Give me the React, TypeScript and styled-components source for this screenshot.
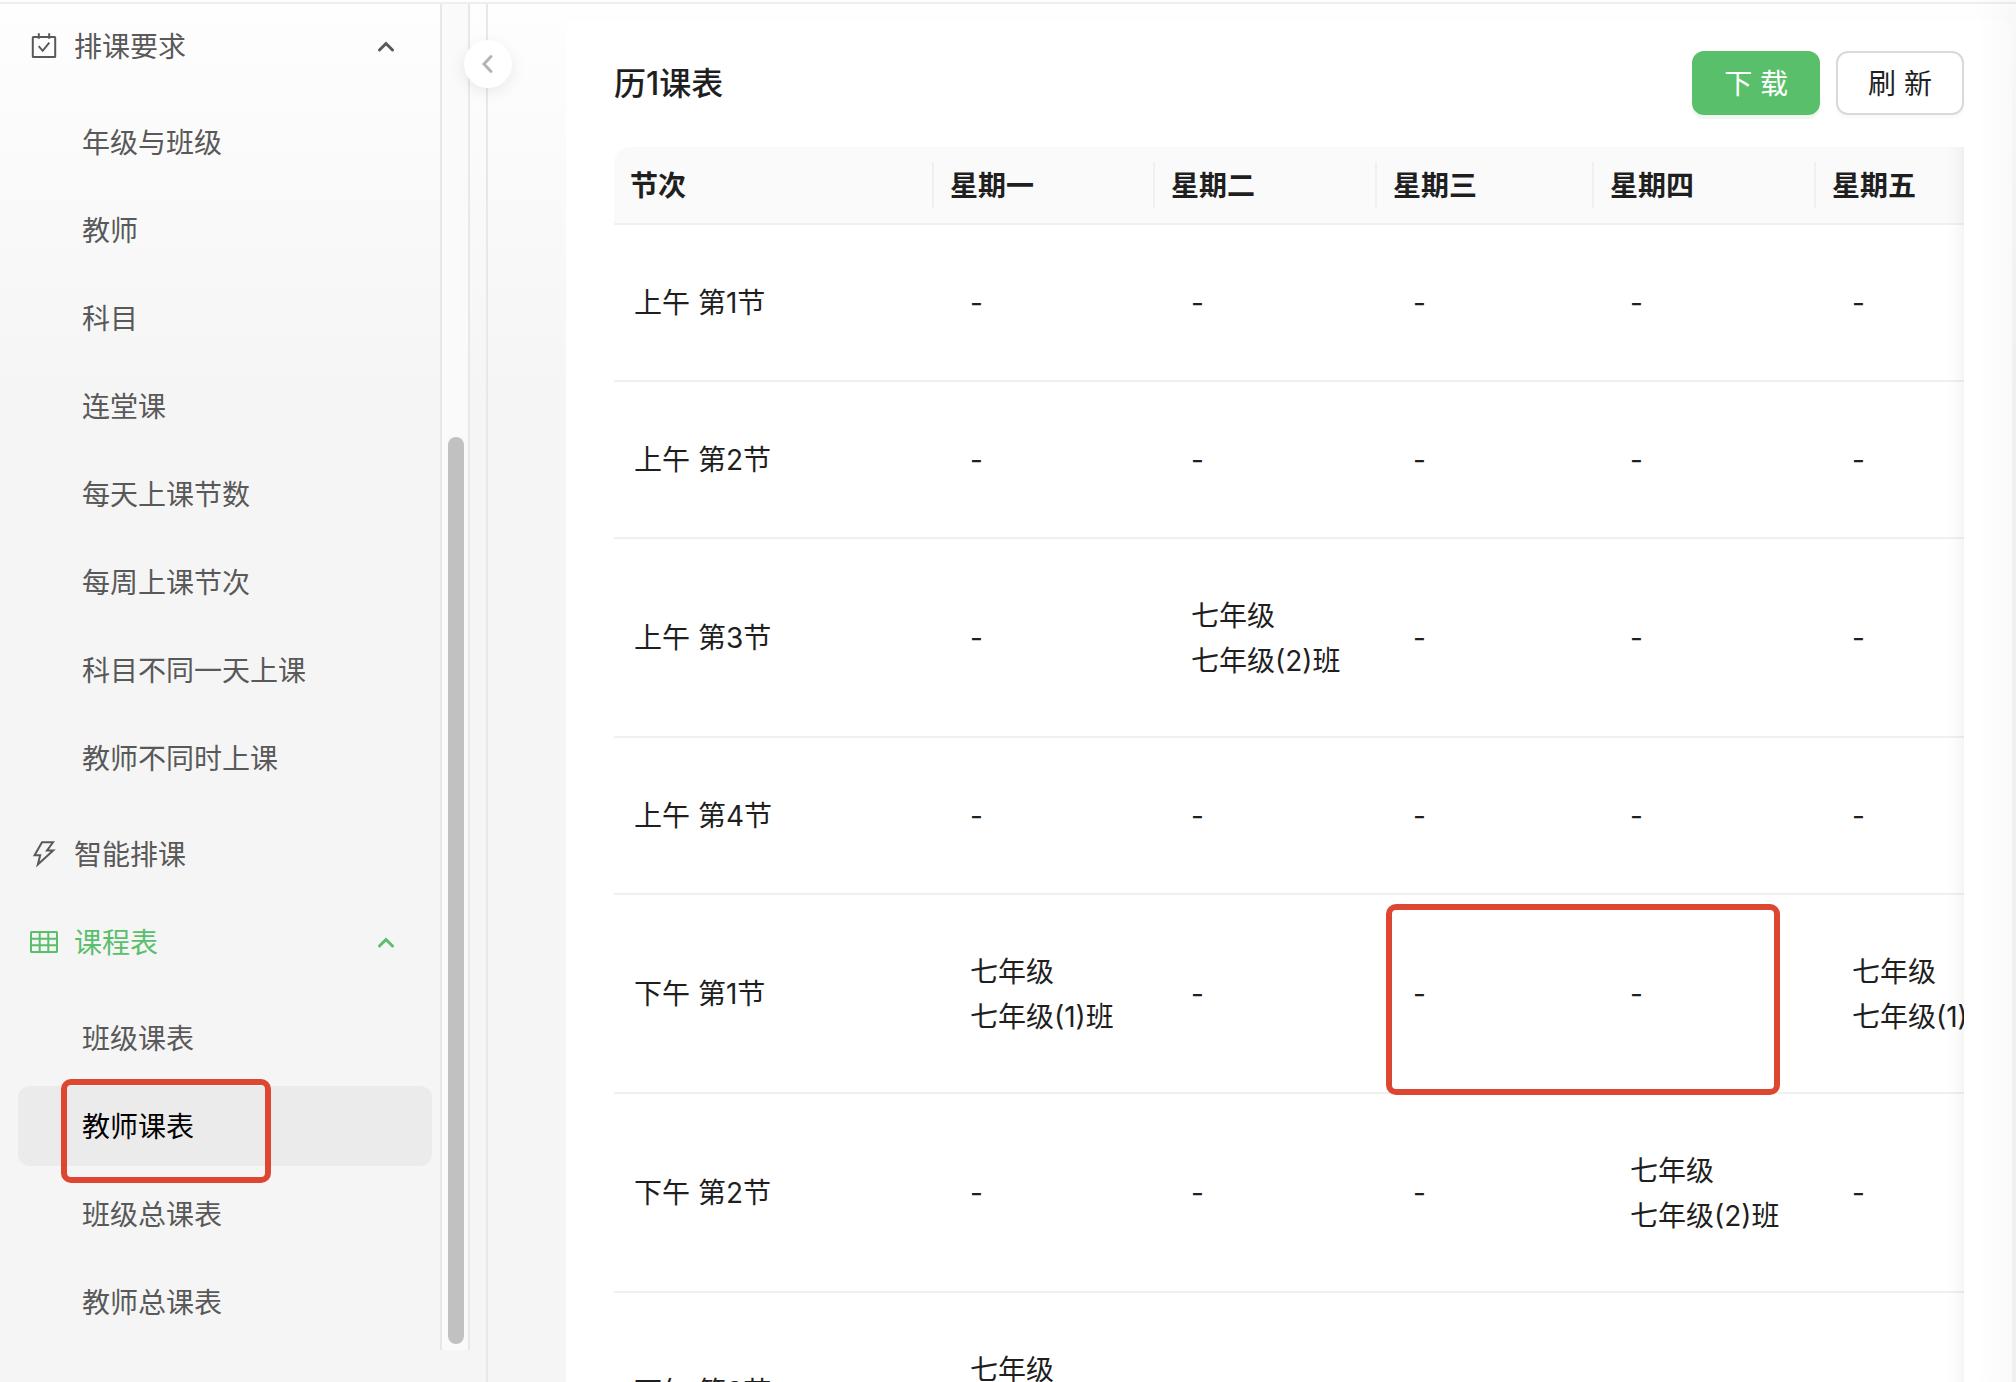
import React from "react";
import styled, { createGlobalStyle, css } from "styled-components";

const GlobalStyle = createGlobalStyle`
  *, *::before, *::after { box-sizing: border-box; }
  body {
    margin: 0;
    font-family: Inter, "Noto Sans CJK SC", sans-serif;
    font-size: 28px;
    line-height: 45px;
    color: #1f1f1f;
    background: #ffffff;
  }
  button { font: inherit; color: inherit; }
`;

const Page = styled.div`
  display: flex;
  height: 100vh;
  overflow: hidden;
  position: relative;
  padding-top: 2px;
  background: linear-gradient(#fefefe, #f5f5f5 400px);
`;

const Shell = styled.div`
  display: flex;
  flex: 1;
  min-width: 0;
  border-top: 2px solid #eeeeee;
`;

const EdgeShade = styled.div`
  position: absolute;
  top: 0;
  right: 0;
  bottom: 0;
  width: 40px;
  pointer-events: none;
  background: linear-gradient(to right, rgba(0, 0, 0, 0), rgba(0, 0, 0, 0.025));
`;

const Sidebar = styled.aside`
  position: relative;
  flex: none;
  width: 488px;
  padding: 0 16px 32px 0;
  border-right: 2px solid #e8e8e8;
`;

const ScrollArea = styled.div`
  display: flex;
  height: 100%;
`;

const Menu = styled.nav`
  flex: 1;
  min-width: 0;
  padding: 2px 8px 0 18px;
  overflow: hidden;
`;

const Track = styled.div`
  display: flex;
  flex-direction: column;
  justify-content: flex-end;
  width: 30px;
  padding: 6px 4px 6px 6px;
  border: solid #e8e8e8;
  border-width: 0 2px;
  background: #fafafa;
`;

const Thumb = styled.div`
  height: 68%;
  border-radius: 8px;
  background: #c1c1c1;
`;

const GroupTitle = styled.button<{ $active?: boolean }>`
  display: flex;
  align-items: center;
  gap: 16px;
  width: 100%;
  height: 80px;
  padding: 0 36px 0 12px;
  border: 0;
  background: none;
  text-align: left;
  color: ${(p) => (p.$active ? "#5abf6b" : "#595959")};

  & > span {
    flex: 1;
    padding-top: 2px;
  }
`;

const List = styled.ul`
  margin: 0;
  padding: 16px 0;
  list-style: none;
  display: flex;
  flex-direction: column;
  gap: 8px;
`;

const Gap = styled.div`
  height: 8px;
`;

const Item = styled.li`
  position: relative;
`;

const ItemLink = styled.a<{ $selected?: boolean }>`
  display: flex;
  align-items: center;
  height: 80px;
  padding: 2px 0 0 64px;
  border-radius: 12px;
  text-decoration: none;
  color: #595959;
  ${(p) =>
    p.$selected &&
    css`
      color: #000000;
      background: #ebebeb;
    `}
`;

const Mark = styled.div`
  position: absolute;
  border: 6px solid #dd4630;
  border-radius: 10px;
  pointer-events: none;
  z-index: 2;
`;

const ItemMark = styled(Mark)`
  left: 43px;
  top: -7px;
  width: 210px;
  height: 104px;
`;

const CellMark = styled(Mark)`
  left: 9px;
  top: 9px;
  width: 394px;
  height: 191px;
`;

const Collapse = styled.button`
  position: absolute;
  top: 36px;
  right: -26px;
  display: grid;
  place-items: center;
  width: 48px;
  height: 48px;
  padding: 0;
  border: 0;
  border-radius: 50%;
  color: #b5b5b5;
  background: #ffffff;
  box-shadow: 0 4px 16px rgba(0, 0, 0, 0.08);
`;

const Main = styled.main`
  flex: 1;
  min-width: 0;
  padding: 16px 4px 0 78px;
`;

const Card = styled.section`
  height: 100%;
  padding: 31px 48px 0;
  overflow: hidden;
  border-radius: 12px 12px 0 0;
  background: #ffffff;
`;

const CardHead = styled.header`
  display: flex;
  align-items: center;
  justify-content: space-between;
  margin-bottom: 32px;
`;

const Title = styled.h1`
  margin: 0;
  font-size: 32px;
  font-weight: 500;
`;

const Actions = styled.div`
  display: flex;
  gap: 16px;
`;

const Button = styled.button<{ $primary?: boolean }>`
  height: 64px;
  padding: 2px 30px 0;
  border: 2px solid ${(p) => (p.$primary ? "#5abf6b" : "#d9d9d9")};
  border-radius: 12px;
  line-height: 44px;
  color: ${(p) => (p.$primary ? "#ffffff" : "#1f1f1f")};
  background: ${(p) => (p.$primary ? "#5abf6b" : "#ffffff")};
  box-shadow: 0 4px 0 ${(p) => (p.$primary ? "rgba(90, 191, 107, 0.1)" : "rgba(0, 0, 0, 0.02)")};
`;

const TableWrap = styled.div`
  position: relative;
  overflow: hidden;
  border-radius: 16px 0 0 0;

  &::after {
    content: "";
    position: absolute;
    inset: 0 0 0 auto;
    width: 60px;
    pointer-events: none;
    box-shadow: inset -20px 0 16px -16px rgba(5, 5, 5, 0.06);
  }
`;

const Table = styled.table`
  width: 100%;
  min-width: 1423px;
  table-layout: fixed;
  border-collapse: separate;
  border-spacing: 0;
`;

const Th = styled.th`
  position: relative;
  height: 78px;
  padding: 2px 16px 0;
  border-bottom: 2px solid #f0f0f0;
  text-align: left;
  font-weight: 600;
  background: #fafafa;

  &:not(:last-child)::after {
    content: "";
    position: absolute;
    top: 15px;
    right: 0;
    width: 2px;
    height: 46px;
    background: #f0f0f0;
  }
`;

const Td = styled.td<{ $tall?: boolean; $label?: boolean }>`
  position: relative;
  height: ${(p) => (p.$tall ? 199 : 157)}px;
  padding: 2px 0 0 ${(p) => (p.$label ? 20 : 36)}px;
  border-bottom: 2px solid #f0f0f0;
  white-space: nowrap;
`;

const Chevron = ({ left }: { left?: boolean }) => (
  <svg width="20" height="20" viewBox="0 0 20 20" fill="none" stroke="currentColor" strokeWidth="3" strokeLinecap="round">
    <path d={left ? "M13 2.5L6 10l7 7.5" : "M3.5 14L10 7.5l6.5 6.5"} />
  </svg>
);

const MenuIcon = ({ children }: { children: React.ReactNode }) => (
  <svg width="28" height="28" viewBox="0 0 28 28" fill="none" stroke="currentColor" strokeWidth="2" aria-hidden="true">
    {children}
  </svg>
);

const CalendarIcon = () => (
  <MenuIcon>
    <rect x="2.8" y="5" width="22.4" height="20" rx="0.6" />
    <path d="M8.8 1.2v5.6M19.2 1.2v5.6M8.7 14.2l4 4.6 6.6-8.2" />
  </MenuIcon>
);

const BoltIcon = () => (
  <MenuIcon>
    <path d="M12 2.3h11L17 10.5h6.2L7.8 24.6l2.4-9.4H4.6z" />
  </MenuIcon>
);

const GridIcon = () => (
  <MenuIcon>
    <rect x="1" y="4" width="26" height="20" rx="0.6" />
    <path d="M1 10.7h26M1 17.3h26M9.7 4v20M18.3 4v20" />
  </MenuIcon>
);

const requirements = ["年级与班级", "教师", "科目", "连堂课", "每天上课节数", "每周上课节次", "科目不同一天上课", "教师不同时上课"];
const schedules = ["班级课表", "教师课表", "班级总课表", "教师总课表"];
const columns = ["节次", "星期一", "星期二", "星期三", "星期四", "星期五"];
const widths = [320, 221, 222, 217, 222, 221];

type Row = { label: string; cells: (string | null)[] };
const rows: Row[] = [
  { label: "上午 第1节", cells: [null, null, null, null, null] },
  { label: "上午 第2节", cells: [null, null, null, null, null] },
  { label: "上午 第3节", cells: [null, "七年级(2)班", null, null, null] },
  { label: "上午 第4节", cells: [null, null, null, null, null] },
  { label: "下午 第1节", cells: ["七年级(1)班", null, null, null, "七年级(1)班"] },
  { label: "下午 第2节", cells: [null, null, null, "七年级(2)班", null] },
  { label: "下午 第3节", cells: ["七年级(1)班", null, null, null, null] },
];

export default function App() {
  return (
    <>
      <GlobalStyle />
      <Page>
        <Shell>
          <Sidebar>
            <ScrollArea>
              <Menu aria-label="主菜单">
                <GroupTitle type="button" aria-expanded="true">
                  <CalendarIcon />
                  <span>排课要求</span>
                  <Chevron />
                </GroupTitle>
                <List>
                  {requirements.map((name) => (
                    <Item key={name}>
                      <ItemLink href="#">{name}</ItemLink>
                    </Item>
                  ))}
                </List>
                <GroupTitle type="button">
                  <BoltIcon />
                  <span>智能排课</span>
                </GroupTitle>
                <Gap />
                <GroupTitle type="button" aria-expanded="true" $active>
                  <GridIcon />
                  <span>课程表</span>
                  <Chevron />
                </GroupTitle>
                <List>
                  {schedules.map((name) => {
                    const selected = name === "教师课表";
                    return (
                      <Item key={name}>
                        <ItemLink href="#" $selected={selected} aria-current={selected ? "page" : undefined}>
                          {name}
                        </ItemLink>
                        {selected && <ItemMark />}
                      </Item>
                    );
                  })}
                </List>
              </Menu>
              <Track>
                <Thumb />
              </Track>
            </ScrollArea>
            <Collapse type="button" aria-label="收起菜单">
              <Chevron left />
            </Collapse>
          </Sidebar>
          <Main>
            <Card>
              <CardHead>
                <Title>历1课表</Title>
                <Actions>
                  <Button type="button" $primary>下 载</Button>
                  <Button type="button">刷 新</Button>
                </Actions>
              </CardHead>
              <TableWrap>
                <Table>
                  <colgroup>
                    {widths.map((w, i) => (
                      <col key={i} style={{ width: w }} />
                    ))}
                  </colgroup>
                  <thead>
                    <tr>
                      {columns.map((c) => (
                        <Th key={c} scope="col">{c}</Th>
                      ))}
                    </tr>
                  </thead>
                  <tbody>
                    {rows.map((row) => {
                      const tall = row.cells.some(Boolean);
                      return (
                        <tr key={row.label}>
                          <Td $tall={tall} $label>{row.label}</Td>
                          {row.cells.map((cell, i) => (
                            <Td key={i} $tall={tall}>
                              {cell ? (
                                <>
                                  <div>七年级</div>
                                  <div>{cell}</div>
                                </>
                              ) : (
                                "-"
                              )}
                              {row.label === "下午 第1节" && i === 2 && <CellMark />}
                            </Td>
                          ))}
                        </tr>
                      );
                    })}
                  </tbody>
                </Table>
              </TableWrap>
            </Card>
          </Main>
        </Shell>
        <EdgeShade />
      </Page>
    </>
  );
}
